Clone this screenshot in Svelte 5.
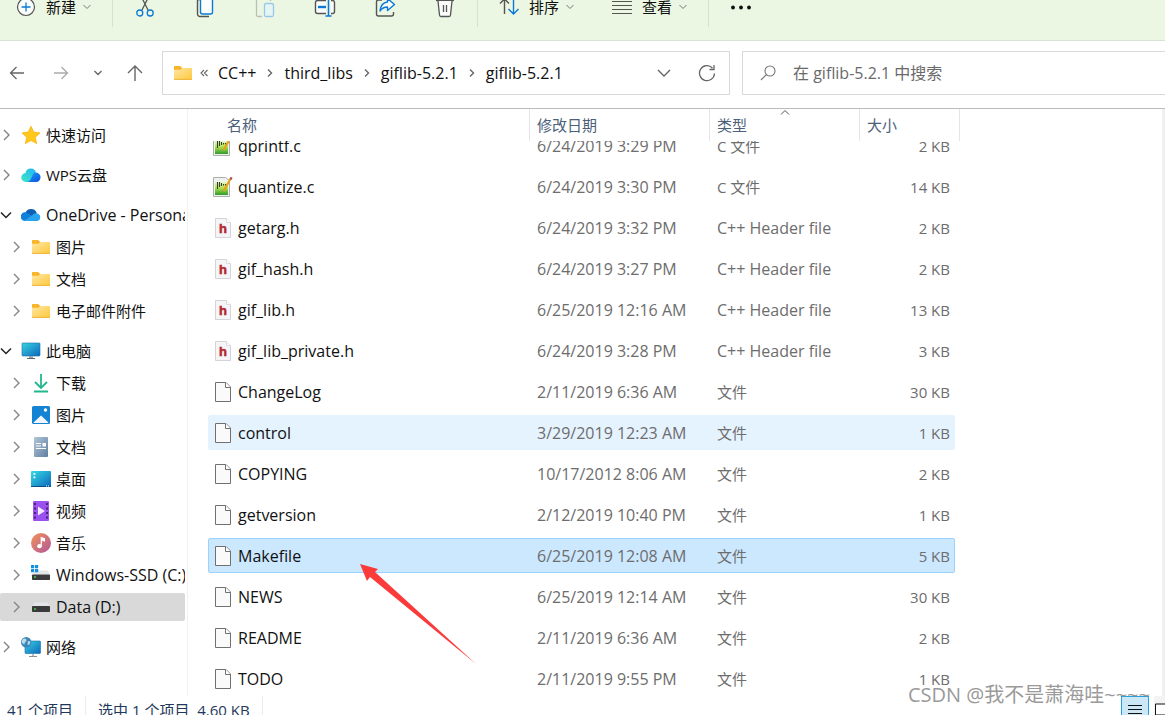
<!-- App.svelte (Explorer window) -->
<script>
  let selectedFile = $state('Makefile');
  let hoveredFile = $state('control');
  let selectedNode = $state('data');
  let query = $state('');

  const tools = [
    { icon: 'cut', label: '剪切' },
    { icon: 'copy', label: '复制' },
    { icon: 'paste', label: '粘贴' },
    { icon: 'rename', label: '重命名' },
    { icon: 'share', label: '共享' },
    { icon: 'trash', label: '删除' }
  ];

  const crumbs = ['CC++', 'third_libs', 'giflib-5.2.1', 'giflib-5.2.1'];

  const groups = [
    [{ id: 'quick', icon: 'star', label: '快速访问' }],
    [{ id: 'wps', icon: 'wps', label: 'WPS云盘' }],
    [
      { id: 'onedrive', icon: 'onedrive', label: 'OneDrive - Personal', open: true, latin: true },
      { id: 'od-pictures', icon: 'folder', label: '图片', child: true },
      { id: 'od-docs', icon: 'folder', label: '文档', child: true },
      { id: 'od-mail', icon: 'folder', label: '电子邮件附件', child: true }
    ],
    [
      { id: 'pc', icon: 'pc', label: '此电脑', open: true },
      { id: 'downloads', icon: 'download', label: '下载', child: true },
      { id: 'pictures', icon: 'picture', label: '图片', child: true },
      { id: 'docs', icon: 'document', label: '文档', child: true },
      { id: 'desktop', icon: 'desktop', label: '桌面', child: true },
      { id: 'videos', icon: 'video', label: '视频', child: true },
      { id: 'music', icon: 'music', label: '音乐', child: true },
      { id: 'system', icon: 'systemDrive', label: 'Windows-SSD (C:)', child: true, latin: true },
      { id: 'data', icon: 'drive', label: 'Data (D:)', child: true, latin: true }
    ],
    [{ id: 'network', icon: 'network', label: '网络' }]
  ];

  const files = [
    { name: 'qprintf.c', date: '6/24/2019 3:29 PM', type: 'C 文件', size: '2 KB', icon: 'cFile' },
    { name: 'quantize.c', date: '6/24/2019 3:30 PM', type: 'C 文件', size: '14 KB', icon: 'cFile' },
    { name: 'getarg.h', date: '6/24/2019 3:32 PM', type: 'C++ Header file', size: '2 KB', icon: 'hFile' },
    { name: 'gif_hash.h', date: '6/24/2019 3:27 PM', type: 'C++ Header file', size: '2 KB', icon: 'hFile' },
    { name: 'gif_lib.h', date: '6/25/2019 12:16 AM', type: 'C++ Header file', size: '13 KB', icon: 'hFile' },
    { name: 'gif_lib_private.h', date: '6/24/2019 3:28 PM', type: 'C++ Header file', size: '3 KB', icon: 'hFile' },
    { name: 'ChangeLog', date: '2/11/2019 6:36 AM', type: '文件', size: '30 KB', icon: 'file' },
    { name: 'control', date: '3/29/2019 12:23 AM', type: '文件', size: '1 KB', icon: 'file' },
    { name: 'COPYING', date: '10/17/2012 8:06 AM', type: '文件', size: '2 KB', icon: 'file' },
    { name: 'getversion', date: '2/12/2019 10:40 PM', type: '文件', size: '1 KB', icon: 'file' },
    { name: 'Makefile', date: '6/25/2019 12:08 AM', type: '文件', size: '5 KB', icon: 'file' },
    { name: 'NEWS', date: '6/25/2019 12:14 AM', type: '文件', size: '30 KB', icon: 'file' },
    { name: 'README', date: '2/11/2019 6:36 AM', type: '文件', size: '2 KB', icon: 'file' },
    { name: 'TODO', date: '2/11/2019 9:55 PM', type: '文件', size: '1 KB', icon: 'file' }
  ];

  const icons = {
    plus: `<svg width="20" height="20" viewBox="0 0 20 20" fill="none"><circle cx="10" cy="10" r="8.5" fill="#fafdf9" stroke="#555" stroke-width="1.2"/><path d="M10 5.5v9M5.5 10h9" stroke="#0a7ad6" stroke-width="1.3"/></svg>`,
    cut: `<svg width="24" height="24" viewBox="0 0 24 24" fill="none" stroke-width="1.3"><path d="M8 1l7 14M16 1L9 15" stroke="#555"/><circle cx="6.8" cy="18" r="3" stroke="#0a7ad6"/><circle cx="17.2" cy="18" r="3" stroke="#0a7ad6"/></svg>`,
    copy: `<svg width="24" height="24" viewBox="0 0 24 24" fill="none" stroke-width="1.4"><path d="M7 4.5H6A1.5 1.5 0 0 0 4.5 6v13A2.5 2.5 0 0 0 7 21.5h9" stroke="#555"/><rect x="7.5" y="1.5" width="12" height="17.5" rx="2" fill="#fafdf9" stroke="#0a7ad6"/></svg>`,
    paste: `<svg width="24" height="24" viewBox="0 0 24 24" fill="none" stroke-width="1.3"><path d="M9 21.5H5A1.5 1.5 0 0 1 3.5 20V5A1.5 1.5 0 0 1 5 3.5h11A1.5 1.5 0 0 1 17.5 5v1" stroke="#b9bfb7"/><rect x="11.5" y="8.5" width="9" height="13" rx="1.5" fill="#e6f4f4" stroke="#96c9e8"/></svg>`,
    rename: `<svg width="24" height="24" viewBox="0 0 24 24" fill="none" stroke-width="1.4"><path d="M13 5.5H4.500A2 2 0 0 0 2.500 7.500v9a2 2 0 0 0 2 2H13M18 5.500h1.500a2 2 0 0 1 2 2v9a2 2 0 0 1-2 2H18" fill="#fafdf9" stroke="#555"/><path d="M5 12h8" stroke="#0a7ad6" stroke-width="2.4"/><path d="M15.500 2v19M12.500 21h6" stroke="#0a7ad6" stroke-width="1.5"/></svg>`,
    share: `<svg width="24" height="24" viewBox="0 0 24 24" fill="none" stroke-width="1.4"><path d="M9 5H5.500a2 2 0 0 0-2 2v12a2 2 0 0 0 2 2h13a2 2 0 0 0 2-2v-2" stroke="#555"/><path d="M14.500 3.500l7 6-7 6V12c-3.500 0-5.500 1-7.500 4 .5-5 3-8.500 7.500-9z" fill="#fafdf9" stroke="#0a7ad6" stroke-linejoin="round"/></svg>`,
    trash: `<svg width="24" height="24" viewBox="0 0 24 24" fill="none" stroke="#555" stroke-width="1.3"><path d="M3 5.500h18"/><path d="M5 6l1.500 14a1.500 1.500 0 0 0 1.500 1.500h8a1.500 1.500 0 0 0 1.500-1.500L19 6" fill="#fafdf9"/><path d="M10.500 10v7M13.500 10v7"/></svg>`,
    sort: `<svg width="20" height="24" viewBox="0 0 20 24" fill="none" stroke-width="1.4"><path d="M5.500 19V4M1 8.500L5.500 4 10 8.500" stroke="#555"/><path d="M14.500 4v15M9.500 14l5 5 5-5" stroke="#0a7ad6"/></svg>`,
    lines: `<svg width="20" height="20" viewBox="0 0 20 20" stroke="#555" stroke-width="1"><path d="M0 4.500h20M0 8.500h20M0 12.500h20M0 16.500h20"/></svg>`,
    more: `<svg width="20" height="20" viewBox="0 0 20 20" fill="#111"><circle cx="2" cy="10.5" r="1.9"/><circle cx="10" cy="10.5" r="1.9"/><circle cx="18" cy="10.5" r="1.9"/></svg>`,
    tinyDown: `<svg width="8" height="6" viewBox="0 0 8 6" fill="none" stroke="#777"><path d="M.5 1L4 4.500 7.500 1"/></svg>`,
    back: `<svg width="16" height="16" viewBox="0 0 16 16" fill="none" stroke="#666" stroke-width="1.3"><path d="M15 8H2M7.500 2L1.500 8l6 6"/></svg>`,
    forward: `<svg width="16" height="16" viewBox="0 0 16 16" fill="none" stroke="#aaa" stroke-width="1.3"><path d="M1 8h13M8.500 2l6 6-6 6"/></svg>`,
    down: `<svg width="10" height="8" viewBox="0 0 10 8" fill="none" stroke="#666" stroke-width="1.4"><path d="M1.500 2L5 5.500 8.500 2"/></svg>`,
    up: `<svg width="16" height="18" viewBox="0 0 16 18" fill="none" stroke="#666" stroke-width="1.4"><path d="M8 17V2M1 9l7-7 7 7"/></svg>`,
    wideDown: `<svg width="14" height="10" viewBox="0 0 14 10" fill="none" stroke="#666" stroke-width="1.4"><path d="M1 2l6 6 6-6"/></svg>`,
    refresh: `<svg width="18" height="18" viewBox="0 0 18 18" fill="none" stroke="#666" stroke-width="1.3"><path d="M16.500 9.500A7.500 7.500 0 1 1 14.500 4M16 1v4.500h-4.500"/></svg>`,
    search: `<svg width="16" height="16" viewBox="0 0 16 16" fill="none" stroke="#777" stroke-width="1.1"><circle cx="10" cy="6" r="5"/><path d="M6.500 9.500L1 15"/></svg>`,
    crumb: `<svg width="6" height="8" viewBox="0 0 6 8" fill="none" stroke="#666" stroke-width="1.4"><path d="M1 .5L4.500 4 1 7.500"/></svg>`,
    collapsed: `<svg width="8" height="8" viewBox="0 0 8 8" fill="none" stroke="#666" stroke-width="1.1"><path d="M4 1L1 4l3 3M7.500 1l-3 3 3 3"/></svg>`,
    right: `<svg width="12" height="12" viewBox="0 0 12 12" fill="none" stroke="#858585" stroke-width="1.4"><path d="M4 1l5 5-5 5"/></svg>`,
    expanded: `<svg width="12" height="12" viewBox="0 0 12 12" fill="none" stroke="#222" stroke-width="1.5"><path d="M1 3.500l5 5 5-5"/></svg>`,
    sortUp: `<svg width="10" height="6" viewBox="0 0 10 6" fill="none" stroke="#555"><path d="M1 5.500l4-4 4 4"/></svg>`,
    folder: `<svg width="20" height="20" viewBox="0 0 20 20"><defs><linearGradient id="fold" x1="0" y1="0" x2="1" y2="1"><stop offset="0" stop-color="#ffe7a3"/><stop offset="1" stop-color="#fdc83c"/></linearGradient></defs><path d="M1 3.800A.8.8 0 0 1 1.800 3h5.400l2 2H18.200a.8.8 0 0 1 .8.8V8H1z" fill="#f8b42a"/><path d="M1 6.800h6.500L9.200 5H19v11a.8.8 0 0 1-.8.8H1.800A.8.8 0 0 1 1 16z" fill="url(#fold)"/><path d="M1 16.400h18" stroke="#e9ab28" stroke-width=".8"/></svg>`,
    star: `<svg width="20" height="20" viewBox="0 0 20 20"><path d="M10 1.200l2.700 5.900 6.300.8-4.700 4.300 1.300 6.400-5.600-3.200-5.600 3.200 1.300-6.400L1 7.900l6.300-.8z" fill="#ffc81a" stroke="#f9b313" stroke-width=".8" stroke-linejoin="round"/></svg>`,
    wps: `<svg width="20" height="20" viewBox="0 0 20 20"><defs><linearGradient id="wpsL" x1="0" y1="1" x2="1" y2="0"><stop offset="0" stop-color="#3fe6c2"/><stop offset="1" stop-color="#22b5f6"/></linearGradient><linearGradient id="wpsR" x1="0" y1="0" x2="1" y2="1"><stop offset="0" stop-color="#23a6fa"/><stop offset="1" stop-color="#0a4ede"/></linearGradient></defs><path d="M5 17a4.500 4.500 0 0 1-.5-9A5.300 5.300 0 0 1 15 8L9 17z" fill="url(#wpsL)"/><path d="M6 17c5-.5 4.500-9.300 8.500-9.600a4.800 4.800 0 0 1 .5 9.600z" fill="url(#wpsR)"/></svg>`,
    onedrive: `<svg width="20" height="20" viewBox="0 0 20 20"><path d="M4.500 7.500A6.200 6.200 0 0 1 15.800 8L11 13 3 11z" fill="#0f5fb5"/><path d="M4 16a4.400 4.400 0 1 1 3-7.700l6 3.700-6 4z" fill="#1280d8"/><path d="M3 16l8-5.500c1.800-2.500 5-3 6.500-1.400A3.800 3.800 0 0 1 16.500 16z" fill="#2aa4ee"/></svg>`,
    pc: `<svg width="20" height="20" viewBox="0 0 20 20"><defs><linearGradient id="scr" x1="0" y1="0" x2="1" y2="1"><stop offset="0" stop-color="#38d3e0"/><stop offset="1" stop-color="#0d68bd"/></linearGradient></defs><rect x="1" y="2" width="18" height="13" rx=".8" fill="url(#scr)" stroke="#1a6ea8" stroke-width=".6"/><path d="M8 15h4v2H8z" fill="#9aa3ab"/><path d="M6 17.500h8" stroke="#5d666e" stroke-width="1.2"/></svg>`,
    download: `<svg width="20" height="20" viewBox="0 0 20 20" fill="none" stroke="#22b88d" stroke-width="1.8"><path d="M10 1v13M4 9l6 6 6-6"/><path d="M3 18.500h14"/></svg>`,
    picture: `<svg width="20" height="20" viewBox="0 0 20 20"><rect x="1" y="1" width="18" height="18" rx="1.5" fill="#1583d4"/><path d="M2.500 17.500l7.500-7 7.500 7a1 1 0 0 1-.8.5H3.300a1 1 0 0 1-.8-.5z" fill="#f1f7fd"/><circle cx="14.5" cy="5" r="1.7" fill="#fff"/></svg>`,
    document: `<svg width="20" height="20" viewBox="0 0 20 20"><defs><linearGradient id="doc" x1="0" y1="0" x2="1" y2="1"><stop offset="0" stop-color="#b3c6d9"/><stop offset="1" stop-color="#5f7fa0"/></linearGradient></defs><rect x="3" width="14" height="20" rx="1" fill="url(#doc)"/><path d="M5 6.500h5M5 9h5M5 11.500h10" stroke="#fff" stroke-width="1.2"/><path d="M11.500 6h3.500v3.500h-3.500z" fill="#fff"/></svg>`,
    desktop: `<svg width="20" height="20" viewBox="0 0 20 20"><defs><linearGradient id="desk" x1="0" y1="0" x2="1" y2="1"><stop offset="0" stop-color="#35dbe3"/><stop offset="1" stop-color="#0b66be"/></linearGradient></defs><rect y="2" width="20" height="16" rx=".8" fill="url(#desk)"/><path d="M2.500 4h1.800v1.800H2.500zM2.500 7.500h1.800v1.800H2.500z" fill="#fff"/><path d="M0 17.500h20" stroke="#0b4d85"/><path d="M15 17h1M17 17h1" stroke="#fff"/></svg>`,
    video: `<svg width="20" height="20" viewBox="0 0 20 20"><rect x="2" width="16" height="20" rx="1" fill="#9b51ee"/><path d="M4 2v17M16 2v17" stroke="#49217f" stroke-width="2" stroke-dasharray="2 2.5"/><path d="M7 5.500l7 4.500-7 4.500z" fill="#f3eaff"/></svg>`,
    music: `<svg width="20" height="20" viewBox="0 0 20 20"><defs><linearGradient id="mus" x1="0" y1="0" x2="1" y2="1"><stop offset="0" stop-color="#f39358"/><stop offset="1" stop-color="#b1569b"/></linearGradient></defs><circle cx="10" cy="10" r="10" fill="url(#mus)"/><ellipse cx="8.5" cy="13.2" rx="2.3" ry="2.1" fill="#fff"/><path d="M10.200 13V4.500l3.300 1.200v2.200l-2-.7" fill="#fff" stroke="#fff" stroke-width="1.1"/></svg>`,
    drive: `<svg width="20" height="20" viewBox="0 0 20 20"><path d="M3.500 5.500h13L19 9.500H1z" fill="#e3e5e9"/><rect x="1" y="9" width="18" height="6" rx=".8" fill="#3b3b3d"/><circle cx="4" cy="12" r="1" fill="#35d63d"/></svg>`,
    systemDrive: `<svg width="20" height="20" viewBox="0 0 20 20"><path d="M5 5.500h12L19 9.500H1z" fill="#e3e5e9"/><rect x="1" y="9.5" width="18" height="5.5" rx=".8" fill="#3b3b3d"/><circle cx="4" cy="12" r="1" fill="#35d63d"/><path d="M0 0h3.200v3.200H0zM4 0h3.200v3.200H4zM0 4h3.200v3.200H0zM4 4h3.200v3.200H4z" fill="#1390dc"/></svg>`,
    network: `<svg width="20" height="20" viewBox="0 0 20 20"><defs><linearGradient id="net" x1="0" y1="0" x2="1" y2="1"><stop offset="0" stop-color="#38d3e0"/><stop offset="1" stop-color="#0d68bd"/></linearGradient></defs><rect x="4" y="4" width="15.500" height="12.5" rx=".8" fill="url(#net)" stroke="#1a6ea8" stroke-width=".6"/><path d="M8 19.500h8M12 17v2" stroke="#8a939b" stroke-width="1.2"/><circle cx="5.200" cy="5.200" r="5.2" fill="#3a86b8"/><path d="M1.500 2.500C3 1 5 1.500 5.500 3S3 5.500 3.500 7 1 6 .6 5zM7 4l2.500.5-1 3L6.500 8z" fill="#b9dcec"/></svg>`,
    file: `<svg width="20" height="20" viewBox="0 0 20 20" fill="#fafafa" stroke="#707070"><path d="M2.500.5h10.500l4.500 4.500v14.500h-15z"/><path d="M12.500.5V5.500h5" fill="#fff"/></svg>`,
    hFile: `<svg width="20" height="20" viewBox="0 0 20 20"><path d="M2.500.5h11l4 4v15h-15z" fill="#f5f5f7" stroke="#d3d3d8"/><path d="M13.500.5v4h4" fill="#fff" stroke="#dcdce0"/><text x="10" y="14.5" text-anchor="middle" font-family="Liberation Sans" font-weight="700" font-size="13" fill="#b3272d" stroke="#b3272d" stroke-width=".5">h</text></svg>`,
    cFile: `<svg width="20" height="20" viewBox="0 0 20 20"><defs><linearGradient id="npp" x1="0" y1="0" x2="0" y2="1"><stop offset="0" stop-color="#f4f8ee"/><stop offset=".45" stop-color="#b9e655"/><stop offset="1" stop-color="#2f9a2a"/></linearGradient></defs><path d="M.5.5h12l4 3v16H.5z" fill="#eef1ee" stroke="#a9afa9"/><path d="M2 4h13v14H2z" fill="url(#npp)"/><path d="M4.500 5v7M6.500 5v5M8.500 6v3M10.500 7v1.500M12.500 7v1.500" stroke="#33402c" stroke-width="1.1"/><path d="M17.500 2L10.500 14" stroke="#e7a21c" stroke-width="2.2"/><path d="M18.700.3l-1.300 2.100" stroke="#b4485a" stroke-width="2.2"/></svg>`,
    details: `<svg width="14" height="14" viewBox="0 0 14 14" stroke="#111"><path d="M0 2.500h14M0 6.500h14M0 10.500h14"/></svg>`,
    tiles: `<svg width="14" height="14" viewBox="0 0 14 14" fill="#fff" stroke="#111"><path d="M.5 1h13v11H.5z"/></svg>`
  };
</script>

<div class="window">
  <div class="toolbar">
    <button class="menu-btn first">
      <span class="icon">{@html icons.plus}</span>
      <span>新建</span>
      <span class="icon chev">{@html icons.tinyDown}</span>
    </button>
    <span class="divider"></span>
    {#each tools as tool}
      <button class="tool-btn icon" aria-label={tool.label}>{@html icons[tool.icon]}</button>
    {/each}
    <span class="divider"></span>
    <button class="menu-btn">
      <span class="icon">{@html icons.sort}</span>
      <span>排序</span>
      <span class="icon chev">{@html icons.tinyDown}</span>
    </button>
    <button class="menu-btn">
      <span class="icon">{@html icons.lines}</span>
      <span>查看</span>
      <span class="icon chev">{@html icons.tinyDown}</span>
    </button>
    <span class="divider"></span>
    <button class="tool-btn icon" aria-label="更多">{@html icons.more}</button>
  </div>

  <div class="address-row">
    <div class="history">
      <button class="icon" aria-label="后退">{@html icons.back}</button>
      <button class="icon" aria-label="前进">{@html icons.forward}</button>
      <button class="icon narrow" aria-label="最近位置">{@html icons.down}</button>
      <button class="icon" aria-label="上移">{@html icons.up}</button>
    </div>
    <div class="address">
      <span class="icon">{@html icons.folder}</span>
      <span class="icon overflow">{@html icons.collapsed}</span>
      <nav class="crumbs" aria-label="路径">
        {#each crumbs as crumb, i}
          {#if i > 0}<span class="icon crumb-sep">{@html icons.crumb}</span>{/if}
          <button class="latin">{crumb}</button>
        {/each}
      </nav>
      <button class="icon end-btn" aria-label="历史记录">{@html icons.wideDown}</button>
      <button class="icon end-btn" aria-label="刷新">{@html icons.refresh}</button>
    </div>
    <label class="search">
      <span class="icon">{@html icons.search}</span>
      <input type="text" class="latin" aria-label="搜索" placeholder="在 giflib-5.2.1 中搜索" bind:value={query} />
    </label>
  </div>

  <div class="body">
    <nav class="tree" aria-label="导航窗格">
      {#each groups as group}
        <ul>
          {#each group as node}
            <li>
              <button
                class="node"
                class:child={node.child}
                class:selected={selectedNode === node.id}
                onclick={() => (selectedNode = node.id)}
              >
                <span class="icon arrow">{@html node.open ? icons.expanded : icons.right}</span>
                <span class="icon">{@html icons[node.icon]}</span>
                <span class="node-label" class:latin={node.latin}>{node.label}</span>
              </button>
            </li>
          {/each}
        </ul>
      {/each}
    </nav>

    <div class="list">
      <table>
        <thead>
          <tr>
            <th class="name-head">名称</th>
            <th>修改日期</th>
            <th>类型<span class="icon sort-mark">{@html icons.sortUp}</span></th>
            <th>大小</th>
          </tr>
        </thead>
        <tbody>
          {#each files as file}
            <tr
              class:selected={selectedFile === file.name}
              class:hovered={hoveredFile === file.name}
              onclick={() => (selectedFile = file.name)}
              onmouseenter={() => (hoveredFile = file.name)}
            >
              <td class="name latin"><span class="icon">{@html icons[file.icon]}</span>{file.name}</td>
              <td class="latin">{file.date}</td>
              <td class:latin={file.icon === 'hFile'}>{file.type}</td>
              <td class="size">{file.size}</td>
            </tr>
          {/each}
        </tbody>
      </table>
    </div>
    <div class="scrollbar"></div>
  </div>

  <div class="status">
    <span class="status-item">41 个项目</span>
    <span class="status-item">选中 1 个项目&nbsp; 4.60 KB</span>
    <div class="views">
      <button class="icon active" aria-label="详细信息">{@html icons.details}</button>
      <button class="icon" aria-label="大图标">{@html icons.tiles}</button>
    </div>
  </div>

  <!-- red pointer over the selected file -->
  <svg class="pointer" width="116" height="100" viewBox="0 0 116 100">
    <path d="M0 0L18 5 15 8 116 100 10 13 7 17z" fill="#fb3b3b" />
  </svg>
  <span class="watermark">CSDN @我不是萧海哇~~~~</span>
</div>

<style>
  :global(body) {
    background: #fff;
    overflow: hidden;
  }

  .window {
    position: relative;
    display: flex;
    flex-direction: column;
    height: 100vh;
    overflow: hidden;
    font-family: "Open Sans", "Noto Sans CJK SC", sans-serif;
    font-size: 15px;
    line-height: 20px;
    color: #111;
  }

  button {
    padding: 0;
    border: none;
    background: none;
    font: inherit;
    color: inherit;
    white-space: nowrap;
  }

  .icon {
    display: flex;
    align-items: center;
    justify-content: center;
    flex-shrink: 0;
  }

  .icon :global(svg) {
    display: block;
    flex-shrink: 0;
  }

  /* toolbar, partly scrolled out at the top */
  .toolbar {
    display: flex;
    align-items: flex-end;
    box-sizing: border-box;
    height: 41px;
    padding-bottom: 13px;
    overflow: hidden;
    flex-shrink: 0;
    background: #ebf7e3;
    border-bottom: 1px solid #d7e4d1;
  }

  .menu-btn {
    display: flex;
    align-items: center;
    height: 40px;
    padding: 0 19px;
    gap: 10px;
  }

  .menu-btn.first {
    padding-left: 16px;
  }

  .menu-btn .chev {
    margin-left: -3px;
  }

  .tool-btn {
    width: 60px;
    height: 40px;
  }

  .divider {
    width: 1px;
    height: 40px;
    margin: 0 2px;
    background: #d5e2cf;
    flex-shrink: 0;
  }

  .address-row {
    display: flex;
    align-items: flex-start;
    padding: 10px 0 13px;
    flex-shrink: 0;
    border-bottom: 1px solid #bcbcbc;
  }

  .history {
    display: flex;
    gap: 10px;
    height: 44px;
    margin-right: 10px;
  }

  .history button {
    width: 34px;
  }

  .history .narrow {
    width: 20px;
  }

  .address,
  .search {
    display: flex;
    align-items: center;
    box-sizing: border-box;
    height: 44px;
    border: 1px solid #d9d9d9;
  }

  .address {
    flex: 1 1 568px;
    padding: 0 1px 0 10px;
    margin-right: 12px;
  }

  .overflow {
    margin: 0 10px 0 7px;
  }

  .crumbs {
    display: flex;
    align-items: center;
    flex: 1;
  }

  .crumb-sep {
    margin: 0 11px;
  }

  .end-btn {
    width: 43px;
    height: 42px;
  }

  .search {
    flex: 1 1 423px;
    padding-left: 17px;
    gap: 17px;
    border-right: none;
  }

  .search input {
    flex: 1;
    min-width: 0;
    padding: 0;
    border: none;
    outline: none;
    background: none;
    font-family: inherit;
    color: #111;
  }

  .search input::placeholder {
    color: #6a6a6a;
    opacity: 1;
  }

  .latin {
    font-size: 16px;
  }

  .body {
    display: flex;
    flex: 1;
    min-height: 0;
    overflow: hidden;
  }

  /* navigation tree */
  .tree {
    display: flex;
    flex-direction: column;
    gap: 12px;
    box-sizing: border-box;
    width: 188px;
    padding: 12px 2px 0 0;
    flex-shrink: 0;
    overflow: hidden;
    border-right: 1px solid #f2f2f2;
  }

  .tree ul {
    display: flex;
    flex-direction: column;
    gap: 4px;
    margin: 0;
    padding: 0;
    list-style: none;
  }

  .node {
    display: flex;
    align-items: center;
    width: 100%;
    height: 28px;
    border-radius: 2px;
    overflow: hidden;
  }

  .node.child {
    padding-left: 10px;
  }

  .node.selected {
    background: #d9d9d9;
  }

  .arrow {
    margin-right: 9px;
  }

  .node-label {
    margin-left: 5px;
    overflow: hidden;
  }

  /* file list */
  .list {
    flex: 1;
    min-width: 0;
    padding-left: 20px;
    overflow: hidden;
  }

  table,
  thead {
    display: block;
  }

  thead {
    position: relative;
    z-index: 1;
    background: #fff;
  }

  thead tr {
    display: grid;
    grid-template-columns: 322px 180px 150px 100px;
    width: max-content;
  }

  th {
    position: relative;
    box-sizing: border-box;
    height: 32px;
    padding: 6px 0 0 7px;
    border-right: 1px solid #e5e5e5;
    font-weight: 400;
    text-align: left;
    color: #4c607a;
  }

  .name-head {
    padding-left: 19px;
  }

  .sort-mark {
    position: absolute;
    top: 0;
    left: 50%;
    margin-left: -5px;
  }

  tbody {
    display: flex;
    flex-direction: column;
    gap: 6px;
    margin-top: -13px;
  }

  tbody tr {
    display: grid;
    grid-template-columns: 321px 180px 150px 94px;
    align-items: center;
    box-sizing: border-box;
    width: max-content;
    height: 35px;
    border: 1px solid transparent;
    border-radius: 2px;
  }

  tbody tr.hovered {
    background: #e5f3ff;
  }

  tbody tr.selected {
    background: #cce8ff;
    border-color: #99d1ff;
  }

  td {
    padding: 0 0 0 7px;
    white-space: nowrap;
    color: #6d6d6d;
  }

  td.name {
    display: flex;
    align-items: center;
    gap: 5px;
    padding-left: 4px;
    color: #111;
  }

  td.size {
    padding-right: 4px;
    text-align: right;
  }

  .scrollbar {
    width: 3px;
    flex-shrink: 0;
    background: #f0f0f0;
  }

  /* status bar, cut off by the bottom edge */
  .status {
    display: flex;
    align-items: flex-start;
    height: 19px;
    padding-left: 7px;
    flex-shrink: 0;
    overflow: hidden;
    line-height: 28px;
    color: #1e395b;
  }

  .status-item {
    padding-right: 12px;
    margin-right: 12px;
    border-right: 1px solid #ececec;
  }

  .views {
    display: flex;
    gap: 5px;
    margin-left: auto;
  }

  .views button {
    box-sizing: border-box;
    width: 28px;
    height: 28px;
    border: 1px solid transparent;
  }

  .views button:last-child {
    width: 11px;
    justify-content: flex-start;
    background: #f3f3f3;
  }

  .views .active {
    background: #cce8f6;
    border-color: #26a0da;
  }

  .pointer {
    position: absolute;
    left: 360px;
    top: 564px;
    z-index: 2;
    pointer-events: none;
  }

  .watermark {
    position: absolute;
    right: 15px;
    bottom: 6px;
    z-index: 2;
    font-size: 20px;
    line-height: 28px;
    color: #9a9a9a;
    pointer-events: none;
  }
</style>
